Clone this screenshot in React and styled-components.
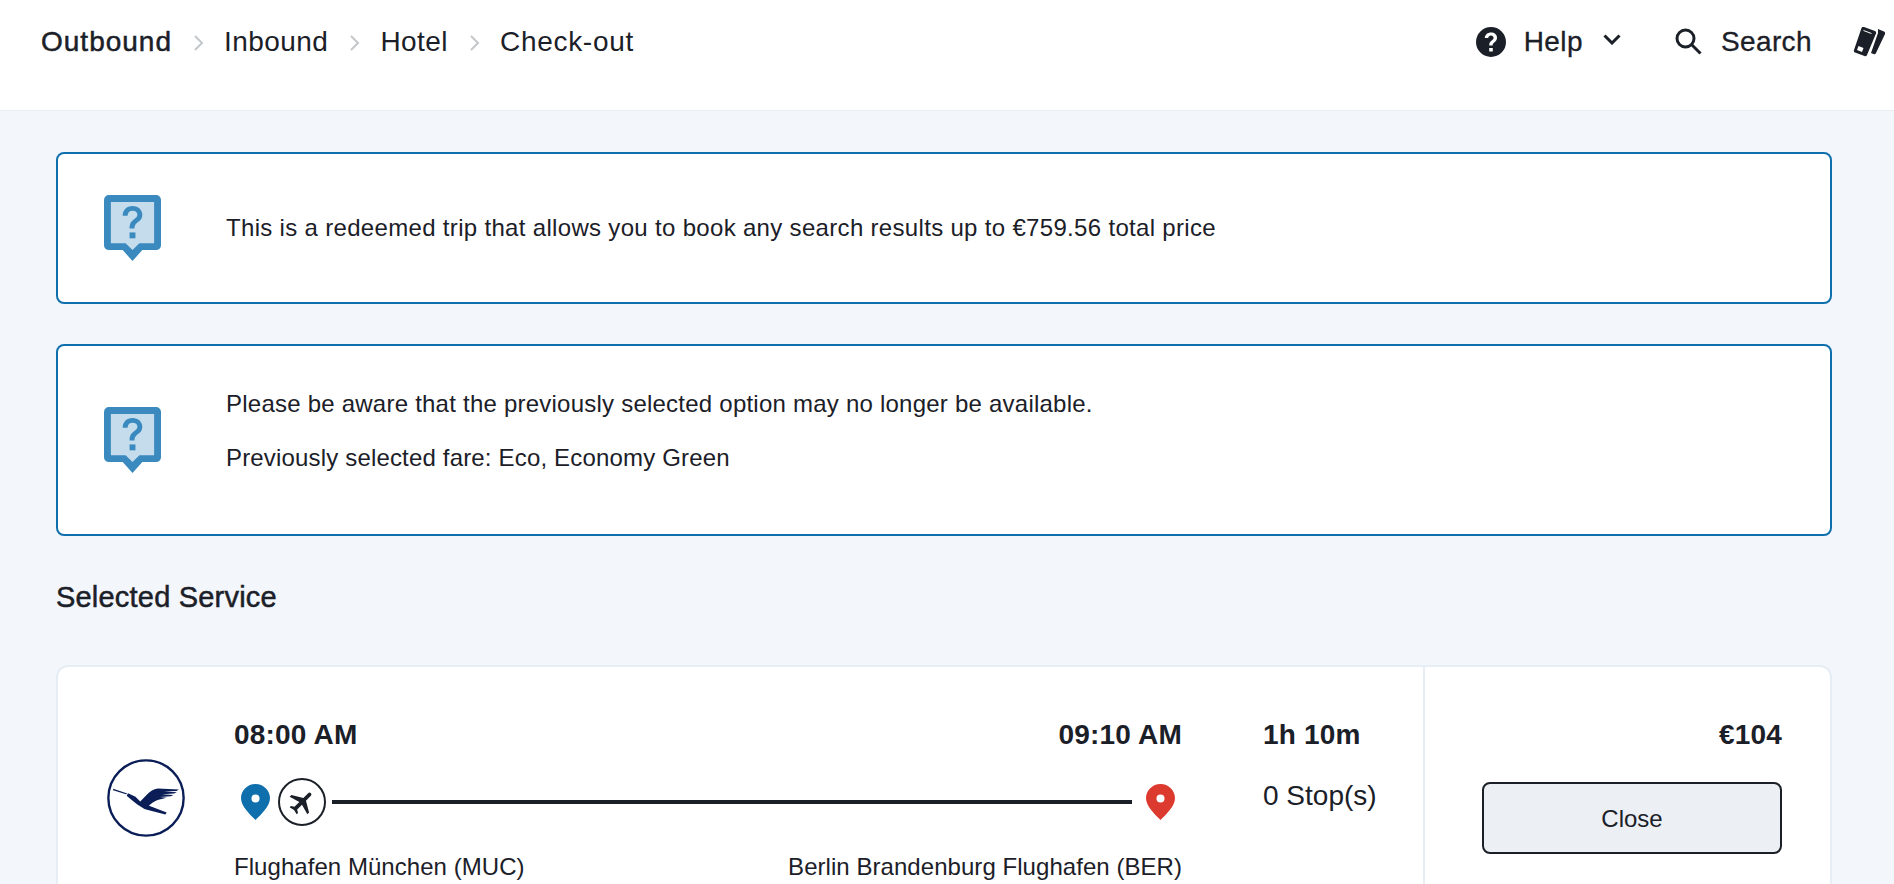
import styled, { createGlobalStyle } from "styled-components";
import { MdLocalAirport } from "react-icons/md";

const GlobalStyle = createGlobalStyle`
  html, body {
    margin: 0;
    height: 100%;
    overflow: hidden;
    background: #f3f6fa;
    color: #1b2028;
    font-family: "Liberation Sans", Arial, sans-serif;
  }
`;

const Header = styled.header`
  display: flex;
  justify-content: space-between;
  align-items: center;
  box-sizing: border-box;
  height: 111px;
  padding: 0 8px 27px 41px;
  background: #ffffff;
  border-bottom: 1px solid #e9edf1;
`;

const Steps = styled.nav`
  display: flex;
  align-items: center;
  font-size: 28px;
`;

const Step = styled.span`
  letter-spacing: ${(p) => p.$tracking || 0.45}px;
  -webkit-text-stroke: ${(p) => (p.$active ? "0.5px" : "0")};
`;

const StepArrow = styled.svg`
  width: 10px;
  height: 16px;
  margin: 2px 20px 0 22px;
  fill: none;
  stroke: #c4c7ca;
  stroke-width: 2;
`;

const Tools = styled.div`
  display: flex;
  align-items: center;
  font-size: 28px;
  letter-spacing: 0.4px;
  -webkit-text-stroke: 0.3px;
`;

const ToolIcon = styled.svg`
  display: block;
  flex: none;
  fill: #1b2028;
`;

const HelpIcon = styled(ToolIcon)`
  width: 30px;
  height: 30px;
  margin-right: 18px;
`;

const Caret = styled(ToolIcon)`
  width: 18px;
  height: 11px;
  margin: 0 54px 4px 20px;
  fill: none;
  stroke: #1b2028;
  stroke-width: 3;
`;

const SearchIcon = styled(ToolIcon)`
  width: 27px;
  height: 27px;
  margin-right: 19px;
  fill: none;
  stroke: #1b2028;
  stroke-width: 3;
`;

const TicketIcon = styled(ToolIcon)`
  width: 33px;
  height: 30px;
  margin-left: 41px;
`;

const Main = styled.main`
  padding: 41px 62px 0 56px;
`;

const Notice = styled.section`
  display: flex;
  align-items: center;
  box-sizing: border-box;
  height: ${(p) => p.$height}px;
  margin-bottom: 40px;
  padding-left: 46px;
  background: #ffffff;
  border: 2px solid #0f6fac;
  border-radius: 8px;
`;

const NoticeIcon = styled.svg`
  flex: none;
  width: 57px;
  height: 66px;
  margin-right: 65px;
`;

const NoticeText = styled.div`
  display: flex;
  flex-direction: column;
  gap: 26px;
  padding-bottom: ${(p) => p.$trail || 0}px;
  font-size: 24px;
  line-height: 28px;
`;

const NoticeLine = styled.span`
  letter-spacing: ${(p) => p.$tracking}px;
`;

const SectionTitle = styled.h2`
  margin: 44px 0 51px;
  font-size: 29px;
  line-height: 34px;
  font-weight: 400;
  letter-spacing: 0.2px;
  -webkit-text-stroke: 0.5px;
`;

const Card = styled.article`
  display: flex;
  box-sizing: border-box;
  height: 400px;
  background: #ffffff;
  border: 2px solid #e6edf4;
  border-bottom: none;
  border-radius: 12px 12px 0 0;
`;

const LogoCol = styled.div`
  flex: none;
  box-sizing: border-box;
  width: 176px;
  padding: 92px 0 0 49px;
`;

const Logo = styled.svg`
  display: block;
  width: 78px;
  height: 78px;
`;

const Flight = styled.div`
  flex: none;
  width: 948px;
  padding-top: 50px;
`;

const TimeRow = styled.div`
  display: flex;
  justify-content: space-between;
`;

const Strong = styled.div`
  font-size: 28px;
  line-height: 36px;
  font-weight: 700;
  letter-spacing: 0.2px;
`;

const RouteRow = styled.div`
  display: flex;
  align-items: center;
  margin: 25px 7px 24px;
`;

const Pin = styled.svg`
  flex: none;
  width: 29px;
  height: 36px;
`;

const PlaneBadge = styled.span`
  flex: none;
  display: flex;
  align-items: center;
  justify-content: center;
  box-sizing: border-box;
  width: 48px;
  height: 48px;
  margin: 0 6px 0 8px;
  border: 2px solid #1b2028;
  border-radius: 50%;
  font-size: 30px;

  svg {
    transform: rotate(45deg);
  }
`;

const Line = styled.span`
  flex: 1;
  height: 4px;
  margin-right: 14px;
  background: #1b2028;
`;

const PlaceRow = styled.div`
  display: flex;
  justify-content: space-between;
  font-size: 24px;
  line-height: 34px;
  letter-spacing: 0.05px;
`;

const Duration = styled.div`
  flex: none;
  box-sizing: border-box;
  width: 241px;
  padding: 50px 0 0 81px;
`;

const Stops = styled.div`
  margin-top: 26px;
  font-size: 28px;
  line-height: 34px;
`;

const PriceCol = styled.div`
  flex: 1;
  display: flex;
  flex-direction: column;
  align-items: flex-end;
  padding: 50px 48px 0 0;
  border-left: 2px solid #e6edf4;
`;

const CloseButton = styled.button`
  box-sizing: border-box;
  width: 300px;
  height: 72px;
  margin-top: 29px;
  padding: 2px 0 0;
  background: #eceff4;
  border: 2px solid #1b2028;
  border-radius: 8px;
  color: #1b2028;
  font: 400 24px "Liberation Sans", Arial, sans-serif;
`;

function StepSeparator() {
  return (
    <StepArrow viewBox="0 0 10 16">
      <path d="M1 1l7 7-7 7" />
    </StepArrow>
  );
}

function QuestionBubble() {
  return (
    <NoticeIcon viewBox="0 0 58 67">
      <path d="M5 0h48a5 5 0 0 1 5 5v46a5 5 0 0 1-5 5H39L29 67 19 56H5a5 5 0 0 1-5-5V5a5 5 0 0 1 5-5z" fill="#3a8abf" />
      <path d="M7 7h44v42H36l-7 7-7-7H7z" fill="#c5dced" />
      <path d="M19 21c0-6 4-10 10-10 6 0 10 4 10 9 0 4-2 6-5 8-2 1.500-3 3-3 6h-5c0-5 1.500-7 4-9 2-1.500 4-3 4-5 0-2.500-2-4-5-4-3 0-5 2-5 5z" fill="#3a8abf" />
      <rect x="26" y="38" width="6" height="6" fill="#3a8abf" />
    </NoticeIcon>
  );
}

function MapPin({ color }) {
  return (
    <Pin viewBox="0 0 29 36">
      <path d="M14.500 0C6.500 0 0 6.300 0 14.200 0 22 9 30.500 14.500 36 20 30.500 29 22 29 14.200 29 6.300 22.500 0 14.500 0z" fill={color} />
      <circle cx="14.500" cy="14.500" r="4" fill="#ffffff" />
    </Pin>
  );
}

export default function App() {
  return (
    <>
      <GlobalStyle />
      <Header>
        <Steps>
          <Step $active $tracking={1}>Outbound</Step>
          <StepSeparator />
          <Step>Inbound</Step>
          <StepSeparator />
          <Step>Hotel</Step>
          <StepSeparator />
          <Step $tracking={0.7}>Check-out</Step>
        </Steps>
        <Tools>
          <HelpIcon viewBox="0 0 30 30">
            <path
              fillRule="evenodd"
              d="M15 0a15 15 0 1 1 0 30 15 15 0 0 1 0-30zm-1.800 21v3.600h3.600V21zM15 5.500c-3.500 0-6 2.200-6.200 5.500h3.400c.2-1.500 1.200-2.500 2.800-2.500 1.500 0 2.600 1 2.600 2.300 0 1.200-.7 1.800-1.900 2.700-1.700 1.300-2.500 2.500-2.500 5h3.400c0-1.600.5-2.200 1.700-3.100 1.500-1.200 2.700-2.400 2.700-4.700 0-3.200-2.500-5.200-6-5.200z"
            />
          </HelpIcon>
          Help
          <Caret viewBox="0 0 18 11">
            <path d="M1.500 1.500L9 9l7.500-7.500" />
          </Caret>
          <SearchIcon viewBox="0 0 27 27">
            <circle cx="10.500" cy="10.500" r="8.500" />
            <path d="M16.500 16.500L25.500 25.500" />
          </SearchIcon>
          Search
          <TicketIcon viewBox="0 0 33 30">
            <path d="M11 0l11 4a2 2 0 0 1 1 2.500L14 28a2 2 0 0 1-2.500 1L2 25.500a2 2 0 0 1-1-2.500L8.500 1A2 2 0 0 1 11 0z" />
            <path d="M25 2l6 2.500a2 2 0 0 1 1 2.500l-9 19a2 2 0 0 1-2.500 1l-2.500-1L25 6z" />
            <path d="M5.500 19l5 2-1.500 4-5-2z" fill="#ffffff" />
            <path d="M10.500 3.500l8 3" stroke="#ffffff" fill="none" />
          </TicketIcon>
        </Tools>
      </Header>
      <Main>
        <Notice $height={152}>
          <QuestionBubble />
          <NoticeText>
            <NoticeLine $tracking={0.32}>This is a redeemed trip that allows you to book any search results up to €759.56 total price</NoticeLine>
          </NoticeText>
        </Notice>
        <Notice $height={192}>
          <QuestionBubble />
          <NoticeText $trail={18}>
            <NoticeLine $tracking={0.23}>Please be aware that the previously selected option may no longer be available.</NoticeLine>
            <NoticeLine $tracking={0.17}>Previously selected fare: Eco, Economy Green</NoticeLine>
          </NoticeText>
        </Notice>
        <SectionTitle>Selected Service</SectionTitle>
        <Card>
          <LogoCol>
            <Logo viewBox="0 0 230 230">
              <circle cx="115" cy="115" r="111" fill="none" stroke="#0a1d56" strokeWidth="7" />
              <path d="M18 88L60 102 56 104 18 92z" fill="#0a1d56" />
              <path
                d="M62 101L84 111 98 125 118 105C128 95 136 89 150 87L212 90 205 94 168 96 206 98 198 102 162 104 196 106 188 110 156 112 176 114 152 120C140 124 128 132 124 138L176 158 172 164 118 150C98 142 82 128 58 108z"
                fill="#0a1d56"
              />
            </Logo>
          </LogoCol>
          <Flight>
            <TimeRow>
              <Strong>08:00 AM</Strong>
              <Strong>09:10 AM</Strong>
            </TimeRow>
            <RouteRow>
              <MapPin color="#0f6fac" />
              <PlaneBadge>
                <MdLocalAirport />
              </PlaneBadge>
              <Line />
              <MapPin color="#dd3a2f" />
            </RouteRow>
            <PlaceRow>
              <span>Flughafen München (MUC)</span>
              <span>Berlin Brandenburg Flughafen (BER)</span>
            </PlaceRow>
          </Flight>
          <Duration>
            <Strong>1h 10m</Strong>
            <Stops>0 Stop(s)</Stops>
          </Duration>
          <PriceCol>
            <Strong>€104</Strong>
            <CloseButton>Close</CloseButton>
          </PriceCol>
        </Card>
      </Main>
    </>
  );
}
